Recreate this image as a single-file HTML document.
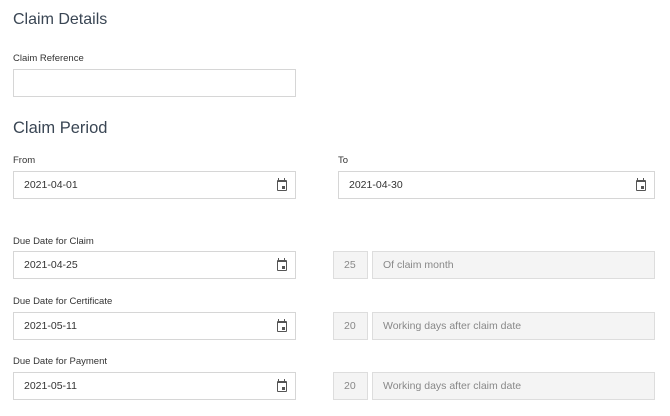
<!DOCTYPE html>
<html><head><style>
body{margin:0;width:670px;height:416px;background:#fff;font-family:"Liberation Sans",sans-serif;color:#333;position:relative;overflow:hidden}
h{position:absolute;font-size:16px;color:#3a4654;left:13px}
.l{position:absolute;font-size:9.5px;color:#333;left:13px}
.i{position:absolute;border:1px solid #d6d6d6;box-sizing:border-box;height:28px;font-size:10.5px;line-height:27px;padding-left:10px;color:#333;background:#fff}
.g{background:#f4f4f4;color:#888;border-color:#ddd}
.c{position:absolute;right:8px;top:8px;width:10px;height:11px;border:1.5px solid #555;border-top-width:2.5px;box-sizing:border-box;border-radius:1px}
.c:after{content:"";position:absolute;right:1px;bottom:1px;width:3px;height:3px;background:#555}
.c:before{content:"";position:absolute;left:0;top:-4px;width:7px;height:2px;border-left:1.2px solid #555;border-right:1.2px solid #555;box-sizing:border-box}
</style></head><body>
<h style="top:11px">Claim Details</h>
<div class="l" style="top:53px">Claim Reference</div>
<div class="i" style="left:13px;top:69px;width:283px"></div>
<h style="top:119px;font-size:16.5px">Claim Period</h>
<div class="l" style="top:155px">From</div>
<div class="l" style="top:155px;left:338px">To</div>
<div class="i" style="left:13px;top:171px;width:283px">2021-04-01<span class="c"></span></div>
<div class="i" style="left:338px;top:171px;width:317px">2021-04-30<span class="c"></span></div>

<div class="l" style="top:236px">Due Date for Claim</div>
<div class="i" style="left:13px;top:251px;width:283px">2021-04-25<span class="c"></span></div>
<div class="i g" style="left:333px;top:251px;width:35px">25</div>
<div class="i g" style="left:372px;top:251px;width:283px">Of claim month</div>

<div class="l" style="top:296px">Due Date for Certificate</div>
<div class="i" style="left:13px;top:312px;width:283px">2021-05-11<span class="c"></span></div>
<div class="i g" style="left:333px;top:312px;width:35px">20</div>
<div class="i g" style="left:372px;top:312px;width:283px">Working days after claim date</div>

<div class="l" style="top:356px">Due Date for Payment</div>
<div class="i" style="left:13px;top:372px;width:283px">2021-05-11<span class="c"></span></div>
<div class="i g" style="left:333px;top:372px;width:35px">20</div>
<div class="i g" style="left:372px;top:372px;width:283px">Working days after claim date</div>
</body></html>
